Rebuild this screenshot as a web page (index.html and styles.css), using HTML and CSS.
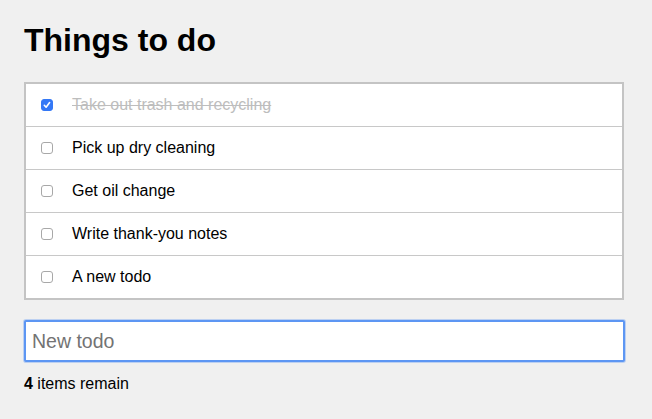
FILE: index.html
```html
<!DOCTYPE html>
<html lang="en">
<head>
<meta charset="utf-8">
<title>Things to do</title>
<link rel="stylesheet" href="styles.css">
</head>
<body>
<main class="app">
  <h1 class="title">Things to do</h1>
  <ul class="todo-list">
    <li class="todo done"><input type="checkbox" class="check" checked><span class="label">Take out trash and recycling</span></li>
    <li class="todo"><input type="checkbox" class="check"><span class="label">Pick up dry cleaning</span></li>
    <li class="todo"><input type="checkbox" class="check"><span class="label">Get oil change</span></li>
    <li class="todo"><input type="checkbox" class="check"><span class="label">Write thank-you notes</span></li>
    <li class="todo"><input type="checkbox" class="check"><span class="label">A new todo</span></li>
  </ul>
  <input class="new-todo" type="text" placeholder="New todo">
  <p class="remain"><strong>4</strong> items remain</p>
</main>
</body>
</html>
```
FILE: styles.css
```css
html, body {
  margin: 0;
  padding: 0;
  background: #f0f0f0;
  font-family: "Liberation Sans", Arial, sans-serif;
  color: #000;
}

.app {
  padding: 0 24px;
  width: 600px;
}

.title {
  font-size: 32px;
  font-weight: bold;
  line-height: 37px;
  margin: 22px 0 23px;
}

.todo-list {
  list-style: none;
  margin: 0;
  padding: 0;
  background: #fff;
  border: 2px solid #c4c4c4;
}

.todo {
  display: flex;
  align-items: center;
  height: 42px;
  padding-left: 15px;
  font-size: 16px;
}

.todo + .todo {
  border-top: 1px solid #c8c8c8;
}

.check {
  -webkit-appearance: none;
  appearance: none;
  box-sizing: border-box;
  width: 12px;
  height: 12px;
  margin: 0 19px 0 0;
  border: 1px solid #a8a8a8;
  border-radius: 3px;
  background: #fff;
}

.check:checked {
  border-color: #3478f6;
  background: #3478f6 url("data:image/svg+xml;utf8,<svg xmlns='http://www.w3.org/2000/svg' viewBox='0 0 12 12'><path d='M3.3 6.3 L5.1 8.2 L8.6 3.6' fill='none' stroke='white' stroke-width='1.6' stroke-linecap='round' stroke-linejoin='round'/></svg>") center / 12px 12px no-repeat;
}

.done .label {
  color: #bdbdbd;
  text-decoration: line-through;
}

.new-todo {
  display: block;
  box-sizing: border-box;
  width: 601px;
  height: 42px;
  margin: 20px 0 0;
  padding: 0 6px;
  font-family: "Liberation Sans", Arial, sans-serif;
  font-size: 19.5px;
  background: #fff;
  border: 2px solid #5d96f3;
  border-radius: 2px;
  box-shadow: 0 0 0 1px rgba(93, 150, 243, 0.35);
  outline: none;
}

.new-todo::placeholder {
  color: #737373;
}

.remain {
  margin: 13px 0 0;
  font-size: 16px;
  line-height: 18px;
}
```
